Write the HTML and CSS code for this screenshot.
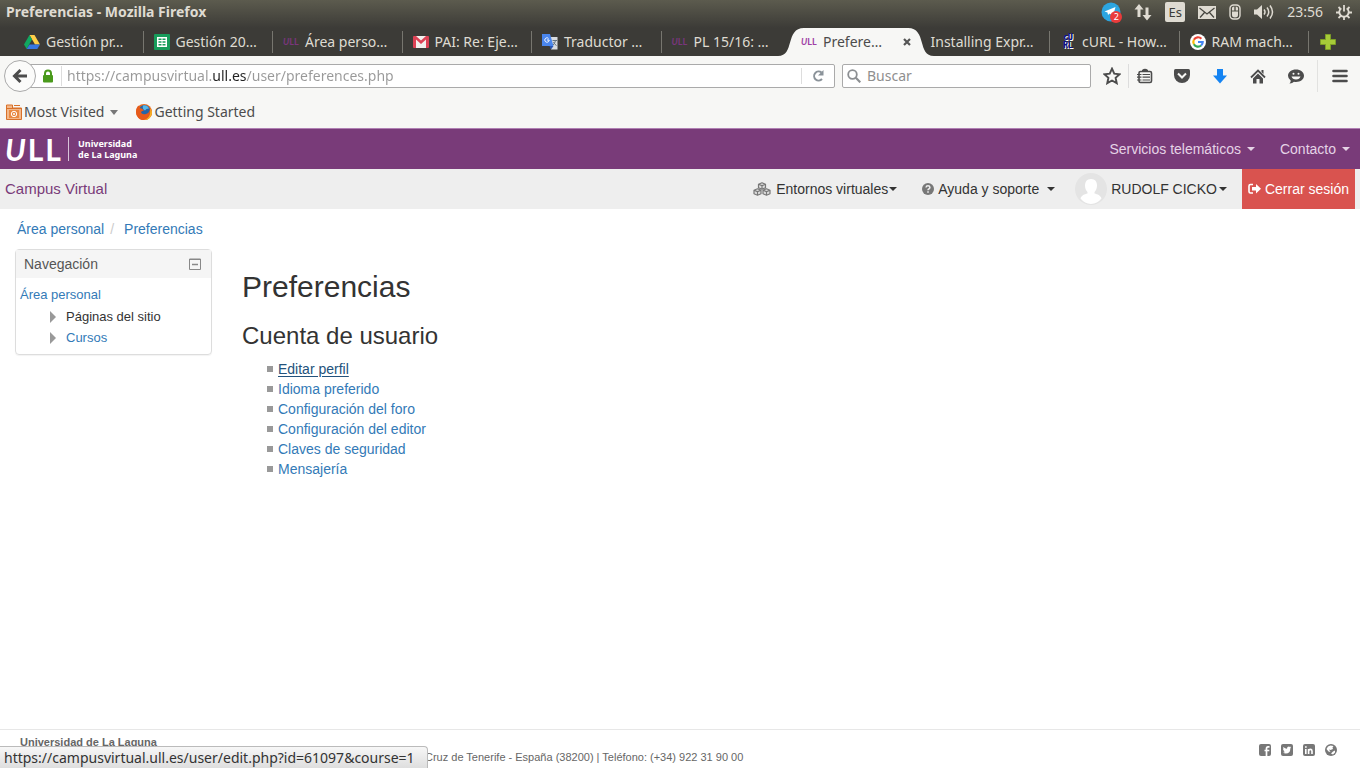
FILE: index.html
```html
<!DOCTYPE html>
<html lang="es">
<head>
<meta charset="utf-8">
<meta name="viewport" content="width=device-width, initial-scale=1">
<title>Preferencias</title>
<link rel="stylesheet" href="styles.css">
</head>
<body>
<div class="titlebar">
  <div class="window-title">Preferencias - Mozilla Firefox</div>
  <div class="tray">
    <span class="telegram">
      <svg width="20" height="20" viewBox="0 0 20 20"><circle cx="10" cy="10" r="9.500" fill="#2ca5e0"/><path d="M3.500 9.500 14.500 5l-2.500 9-3.500-2.500-1.500 1.500-.5-2.500z" fill="#fff"/></svg>
      <span class="badge">2</span>
    </span>
    <svg width="18" height="18" viewBox="0 0 18 18" fill="#dfdbd2"><path d="M5 1 .5 6.500h3V14h3V6.500h3zM13 17.500 8.500 12h3V4.500h3V12h3z"/></svg>
    <span class="lang">Es</span>
    <svg width="18" height="13" viewBox="0 0 18 13"><rect width="18" height="13" fill="#dfdbd2"/><path d="m1.500 2 7.500 6 7.500-6M2 11.500l4.500-5M16 11.500l-4.500-5" fill="none" stroke="#45443e" stroke-width="1.200"/></svg>
    <svg width="12" height="16" viewBox="0 0 12 16"><rect x="1" y="1" width="10" height="14" rx="3.500" fill="none" stroke="#dfdbd2" stroke-width="1.400"/><path d="M3 7.500h6V11q0 2.500-3 2.500T3 11zM3 4q0-1.500 2.300-1.500v4H3zM6.700 2.500Q9 2.500 9 4v2.500H6.700z" fill="#dfdbd2"/></svg>
    <svg width="20" height="16" viewBox="0 0 20 16"><path d="M0 5.500h3L8 1v14l-5-4.500H0z" fill="#dfdbd2"/><path d="M10 5.500q2 2.500 0 5M13 3.500q3.500 4.500 0 9M16 1.500q5 6.500 0 13" fill="none" stroke="#dfdbd2" stroke-width="1.500"/></svg>
    <span class="clock">23:56</span>
    <svg width="16" height="16" viewBox="0 0 16 16" fill="none" stroke="#dfdbd2"><path d="M5.300 4.200a4.700 4.700 0 1 0 5.400 0" stroke-width="1.800"/><path d="M8 1v6.500M8 12.500V16M3.500 8.500H0M12.500 8.500H16M4.800 11.800l-2.300 2.200M11.200 11.800l2.300 2.200M4.300 4.800 2.500 3M11.700 4.800 13.500 3" stroke-width="1.800"/></svg>
  </div>
</div>

<nav class="tabs" aria-label="Pestañas">
  <div class="tab-list">
    <a class="tab sep" href="#"><svg class="fav" viewBox="0 0 16 16"><path d="M5.500 1h5L16 10.500h-5z" fill="#ffcf48"/><path d="M5.500 1 8 5.500 2.700 15 0 10.500z" fill="#11a861"/><path d="M5.500 10.500H16L13.300 15H2.700z" fill="#3777e3"/></svg><span>Gestión pr…</span></a>
    <a class="tab sep" href="#"><svg class="fav" viewBox="0 0 16 16"><rect width="16" height="16" rx="1" fill="#179c5b"/><path d="M3 3h10v10H3z" fill="#fff"/><path d="M4.500 4.500h3v1.500h-3zM8.500 4.500h3v1.500h-3zM4.500 7.200h3v1.500h-3zM8.500 7.200h3v1.500h-3zM4.500 10h3v1.500h-3zM8.500 10h3v1.500h-3z" fill="#179c5b"/></svg><span>Gestión 20…</span></a>
    <a class="tab sep" href="#"><span class="fav fav-ull"><i>U</i>LL</span><span>Área perso…</span></a>
    <a class="tab sep" href="#"><svg class="fav" viewBox="0 0 16 16"><rect y="2" width="16" height="12" rx="1" fill="#dc4255"/><path d="M3 14V5.500l5 4.500 5-4.500V14zM3 2h10L8 6.500z" fill="#f3f0ee"/></svg><span>PAI: Re: Eje…</span></a>
    <a class="tab sep" href="#"><svg class="fav" viewBox="0 0 16 16"><path d="M8 3h7.500v12.500H9z" fill="#d9dce0"/><path d="M0 0h8l3.500 12H0z" fill="#4a86ed"/><path d="M7.500 12h4L9 15.500z" fill="#2956b3"/><path d="M5 6h2.200a2.200 2.200 0 1 1-.7-1.600" fill="none" stroke="#fff"/><path d="M10.500 6.500h4.500M13.500 6.500q-.5 3-2.500 4.500M11.500 8q1 2.500 3 3.500" fill="none" stroke="#647380"/></svg><span>Traductor …</span></a>
    <a class="tab" href="#"><span class="fav fav-ull"><i>U</i>LL</span><span>PL 15/16: …</span></a>
    <div class="tab active">
      <svg class="curve curve-left" width="26" height="28" viewBox="0 0 26 28"><path d="M0 28C17 28 7 0 26 0v28z" fill="#f7f7f5"/></svg>
      <svg class="curve curve-right" width="26" height="28" viewBox="0 0 26 28"><path d="M26 28C9 28 19 0 0 0v28z" fill="#f7f7f5"/></svg>
      <a class="tab-link" href="#" aria-current="page"><span class="fav fav-ull"><i>U</i>LL</span><span>Prefere…</span></a>
      <button class="close" type="button" aria-label="Cerrar pestaña"><svg width="8" height="8" viewBox="0 0 8 8"><path d="m1 1 6 6M7 1 1 7" stroke="#555" stroke-width="2.200"/></svg></button>
    </div>
    <a class="tab sep" href="#"><span>Installing Expr…</span></a>
    <a class="tab sep" href="#"><span class="fav fav-curl">cU<br>RL</span><span>cURL - How…</span></a>
    <a class="tab sep" href="#"><svg class="fav" viewBox="0 0 16 16"><circle cx="8" cy="8" r="8" fill="#fff"/><g fill="none" stroke-width="2.200"><path d="M11.400 4.700A4.700 4.700 0 0 0 3.900 5.700" stroke="#ea4335"/><path d="M3.900 5.700a4.700 4.700 0 0 0 0 4.600" stroke="#fbbc05"/><path d="M3.900 10.300a4.700 4.700 0 0 0 7.200 1.200" stroke="#34a853"/><path d="M11.100 11.500A4.700 4.700 0 0 0 12.700 8H8" stroke="#4285f4"/></g></svg><span>RAM mach…</span></a>
  </div>
  <button class="new-tab" type="button" aria-label="Nueva pestaña"><svg width="16" height="16" viewBox="0 0 16 16"><path d="M5.500.5h5v5h5v5h-5v5h-5v-5h-5v-5h5z" fill="#a6cb38" stroke="#7d9e26"/></svg></button>
</nav>

<div class="toolbar">
  <form class="nav-row">
    <button class="back" type="button" aria-label="Atrás"><svg width="16" height="16" viewBox="0 0 16 16"><path d="M8.500 2 2.500 8l6 6M3 8h12" fill="none" stroke="#4c4c4c" stroke-width="3"/></svg></button>
    <div class="field url">
      <svg class="lock" width="12" height="14" viewBox="0 0 12 14"><rect x="1" y="6" width="10" height="7.500" rx="1" fill="#4a9a1c"/><path d="M3 7V4.500a3 3 0 0 1 6 0V7" fill="none" stroke="#4a9a1c" stroke-width="2"/></svg>
      <input class="url-input" type="text" aria-label="Dirección" value="https://campusvirtual.ull.es/user/preferences.php">
      <button class="reload" type="button" aria-label="Recargar"><svg width="14" height="14" viewBox="0 0 14 14"><path d="M11 10a4.500 4.500 0 1 1-.5-6.500" fill="none" stroke="#8a9299" stroke-width="2"/><path d="M12.500 1v5.500H7z" fill="#8a9299"/></svg></button>
    </div>
    <div class="field search">
      <svg width="14" height="14" viewBox="0 0 14 14" fill="none" stroke="#8c8f92"><circle cx="5.500" cy="5.500" r="4.300" stroke-width="1.800"/><path d="m8.800 8.800 4.500 4.500" stroke-width="2.200"/></svg>
      <input type="text" aria-label="Buscar" placeholder="Buscar">
    </div>
    <div class="tools">
      <div class="pair">
        <button type="button" aria-label="Marcar página"><svg width="18" height="18" viewBox="0 0 16 16"><path d="m8 1.500 2 4.400 4.800.5-3.600 3.200 1 4.800L8 12l-4.200 2.400 1-4.800L1.200 6.400 6 5.900z" fill="none" stroke="#4c4c4c" stroke-width="1.700"/></svg></button>
        <button type="button" aria-label="Marcadores"><svg width="16" height="16" viewBox="0 0 16 16"><path d="M5 3.500V2Q8-.5 11 2v1.500z" fill="#4c4c4c"/><rect x="2" y="3.500" width="12.500" height="11" rx="1.500" fill="none" stroke="#4c4c4c" stroke-width="1.600"/><path d="M0 6.500h4.500M0 9.200h4.500M0 12h4.500M5.500 6.500h7.500M5.500 9.200h7.500M5.500 12h7.500" stroke="#4c4c4c" stroke-width="1.200"/></svg></button>
      </div>
      <button type="button" aria-label="Pocket"><svg width="16" height="15" viewBox="0 0 16 15"><path d="M1.500 0h13Q16 0 16 1.500V6A8 8 0 0 1 0 6V1.500Q0 0 1.500 0z" fill="#4c4c4c"/><path d="m4 4.500 4 4 4-4" fill="none" stroke="#f7f7f5" stroke-width="2"/></svg></button>
      <button type="button" aria-label="Descargas"><svg width="14" height="15" viewBox="0 0 14 15"><path d="M4 0h6v6.500h4L7 14.500 0 6.500h4z" fill="#1584f2"/></svg></button>
      <button type="button" aria-label="Inicio"><svg width="16" height="15" viewBox="0 0 16 15"><path d="M1 8.500 8 1.500l7 7" fill="none" stroke="#4c4c4c" stroke-width="1.800"/><path d="M11.500 1h2v4l-2-2zM3 9.500l5-5 5 5v5H9.500V10h-3v4.500H3z" fill="#4c4c4c"/></svg></button>
      <button type="button" aria-label="Hello"><svg width="16" height="15" viewBox="0 0 16 15"><path d="M8 .5c4.500 0 8 2.700 8 6.300S12.500 13 8 13q-1 0-2-.2-2 1.900-4.500 1.700 1.500-1.300 1.200-3Q0 9.700 0 6.800C0 3.200 3.500.5 8 .5z" fill="#4c4c4c"/><circle cx="5.500" cy="4.800" r="1" fill="#f7f7f5"/><circle cx="10.500" cy="4.800" r="1" fill="#f7f7f5"/><path d="M3.500 7.500h9q-1 3-4.500 3T3.500 7.500z" fill="#f7f7f5"/></svg></button>
      <span class="divider"></span>
      <button type="button" aria-label="Abrir menú"><svg width="16" height="14" viewBox="0 0 16 14"><path d="M1.500 2h13M1.500 7h13M1.500 12h13" stroke="#4c4c4c" stroke-width="2.600" stroke-linecap="round"/></svg></button>
    </div>
  </form>
  <div class="bookmarks">
    <button type="button"><svg width="16" height="16" viewBox="0 0 16 16"><path d="M.5 1h6v3h9v11.500H.5z" fill="#f3b88a" stroke="#d9712a"/><path d="M8 1.500h6M1 4.500h14" stroke="#d9712a"/><rect x="3" y="6" width="10" height="8" fill="#e98a43"/><circle cx="8" cy="10" r="2.700" fill="none" stroke="#fff"/><circle cx="8" cy="10" r="1" fill="#fff"/></svg><span>Most Visited</span><span class="caret-lg"></span></button>
    <a href="#"><svg width="16" height="16" viewBox="0 0 16 16"><circle cx="8" cy="8" r="8" fill="#e66a1e"/><circle cx="8.500" cy="6.500" r="5.500" fill="#2465a8"/><path d="M7 1.500q4-1 6 3-3 0-4 2-3-1-2-5z" fill="#58b7e8"/><path d="M0 8Q0 3 3 1.500 3 4 5.500 4.500 7 5 8 6.500q-3 .5-3 2 1 2.500 5 1.500 4-1 4-6 2 2 2 4.500A8 8 0 0 1 0 8z" fill="#e65a1a"/><path d="M14 4q2 2.500 2 5a7.500 7.500 0 0 1-8 7q5-1.500 6-6 .5-3 0-6z" fill="#f6b326"/></svg><span>Getting Started</span></a>
  </div>
</div>

<header class="site-header">
  <a class="logo" href="#" aria-label="Universidad de La Laguna"><span class="logo-mark"><i>U</i><span>L</span><span>L</span></span><span class="logo-name">Universidad<br>de La Laguna</span></a>
  <div class="header-menu">
    <button type="button">Servicios telemáticos <span class="caret"></span></button>
    <button type="button">Contacto <span class="caret"></span></button>
  </div>
</header>

<div class="site-nav">
  <a class="brand" href="#">Campus Virtual</a>
  <div class="user-menu">
    <button class="envs" type="button"><svg width="18" height="14" viewBox="0 0 18 14" fill="#ddd" stroke="#777" stroke-width="1.200" stroke-linejoin="round"><path d="m9 .8 3.500 1.400v3.600L9 7.200 5.500 5.800V2.200zM5.500 2.200 9 3.600l3.500-1.400M9 3.600v3.600M4.500 6.800 8 8.200v3.600l-3.500 1.400L1 11.800V8.200zM1 8.200l3.500 1.400L8 8.200M4.500 9.600v3.600M13.500 6.800 17 8.200v3.600l-3.500 1.400-3.500-1.400V8.200zM10 8.200l3.500 1.400L17 8.200M13.500 9.600v3.600"/></svg><span>Entornos virtuales</span><span class="caret"></span></button>
    <button class="help" type="button"><svg width="12" height="12" viewBox="0 0 12 12"><circle cx="6" cy="6" r="6" fill="#777"/><path d="M4 4.500Q4.200 2.800 6 2.800t1.900 1.600Q7.900 5.500 6.800 6 6 6.400 6 7.200" fill="none" stroke="#eee" stroke-width="1.500"/><path d="M5.200 8.200h1.600v1.500H5.200z" fill="#eee"/></svg><span>Ayuda y soporte</span><span class="caret"></span></button>
    <button class="user" type="button"><svg width="32" height="32" viewBox="0 0 32 32"><circle cx="16" cy="16" r="16" fill="#e4e4e4"/><path d="M16 6c4 0 6 2.800 6 6.500 0 3-1 5-2.500 6.500v1.500c3 1 6 1.500 7 5A15 15 0 0 1 16 31 15 15 0 0 1 5.500 25.500c1-3.500 4-4 7-5V19C11 17.500 10 15.500 10 12.500 10 8.800 12 6 16 6z" fill="#fff"/></svg><span>RUDOLF CICKO</span><span class="caret"></span></button>
    <a class="logout" href="#"><svg width="13" height="12" viewBox="0 0 13 12"><path d="M5 1.500H2.500Q1 1.500 1 3v5.500Q1 10 2.500 10H5" fill="none" stroke="#fff" stroke-width="1.600"/><path d="M4 4h4V1l5 4.800-5 4.700v-3H4z" fill="#fff"/></svg><span>Cerrar sesión</span></a>
  </div>
</div>

<nav class="breadcrumb" aria-label="Ruta"><a href="#">Área personal</a><span class="slash">/</span><a href="#">Preferencias</a></nav>

<div class="page">
  <aside class="block">
    <div class="block-head"><h2>Navegación</h2><button type="button" aria-label="Minimizar"><svg width="12" height="12" viewBox="0 0 12 12"><path d="M.5 1h11v10.500H.5zM0 1.500h12" fill="none" stroke="#888" /><path d="M3 6.500h6" stroke="#888" stroke-width="1.500"/></svg></button></div>
    <div class="block-body">
      <a href="#">Área personal</a>
      <ul>
        <li><button type="button">Páginas del sitio</button></li>
        <li><a href="#">Cursos</a></li>
      </ul>
    </div>
  </aside>
  <main>
    <h1>Preferencias</h1>
    <h2>Cuenta de usuario</h2>
    <ul class="prefs">
      <li><a class="hovered" href="#">Editar perfil</a></li>
      <li><a href="#">Idioma preferido</a></li>
      <li><a href="#">Configuración del foro</a></li>
      <li><a href="#">Configuración del editor</a></li>
      <li><a href="#">Claves de seguridad</a></li>
      <li><a href="#">Mensajería</a></li>
    </ul>
  </main>
</div>

<footer>
  <address><b>Universidad de La Laguna</b><span class="address-line">Cruz de Tenerife - España (38200) | Teléfono: (+34) 922 31 90 00</span></address>
  <div class="social">
    <a href="#" aria-label="Facebook"><svg width="12" height="12" viewBox="0 0 12 12"><rect width="12" height="12" rx="2" fill="#777"/><path d="M7.500 12V4.500Q7.500 2.800 9 2.800h1.500M5.500 6.500h4.800" fill="none" stroke="#fff" stroke-width="1.700"/></svg></a>
    <a href="#" aria-label="Twitter"><svg width="12" height="12" viewBox="0 0 12 12"><rect width="12" height="12" rx="2" fill="#777"/><path d="M2 8.500q1.200 0 2-.6-1.300-.2-1.500-1.200h.6Q2 6.200 2 5l.7.200Q1.700 4.300 2.400 3 3.900 4.600 6 4.700 5.900 2.500 7.900 2.500q.7 0 1.100.5l1-.4-.6 1 .8-.2-.8.900Q9.300 9.500 4.800 9.500 3.200 9.500 2 8.500z" fill="#fff"/></svg></a>
    <a href="#" aria-label="LinkedIn"><svg width="12" height="12" viewBox="0 0 12 12"><rect width="12" height="12" rx="2" fill="#777"/><path d="M2.800 5v5M5.600 10V5M5.600 7q.3-1.600 1.800-1.600T9 7v3M2 3h1.700" fill="none" stroke="#fff" stroke-width="1.600"/></svg></a>
    <a href="#" aria-label="Web"><svg width="12" height="12" viewBox="0 0 12 12"><circle cx="6" cy="6" r="6" fill="#777"/><path d="M3 2.500 5.500 1.500 8.500 2 7.500 3.500 8 5 5.500 6 4 5.500 5.500 8 3.500 7.500 1.500 5zM8 7.500l2-1v2L8 10.500 6 9.500z" fill="#fff"/></svg></a>
  </div>
</footer>
<div class="status">https://campusvirtual.ull.es/user/edit.php?id=61097&amp;course=1</div>
</body>
</html>
```
FILE: styles.css
```css
* { box-sizing: border-box; }

body {
  margin: 0;
  min-height: 100vh;
  display: flex;
  flex-direction: column;
  position: relative;
  background: #fff;
  color: #333;
  font: 14px/20px "Liberation Sans", Arial, sans-serif;
}

a { color: #337ab7; text-decoration: none; }
button { margin: 0; padding: 0; border: 0; background: none; color: inherit; font: inherit; }
svg { display: block; flex: none; }
ul { margin: 0; padding: 0; list-style: none; }

/* Window title and tray */
.titlebar, .tabs, .toolbar, .status { font-family: "Noto Sans", "Open Sans", sans-serif; }

.titlebar {
  height: 28px;
  padding: 0 8px 4px 6px;
  display: flex;
  align-items: center;
  justify-content: space-between;
  background: linear-gradient(#5c5b4e, #3c3b37);
  color: #dfdbd2;
}
.window-title { font-size: 14px; font-weight: bold; }
.tray { display: flex; align-items: center; gap: 13px; }
.telegram { position: relative; }
.badge {
  position: absolute;
  right: -1px;
  bottom: -1px;
  width: 12px;
  height: 12px;
  border-radius: 6px;
  background: #ea3b3b;
  color: #fff;
  font-size: 9px;
  line-height: 12px;
  text-align: center;
}
.lang {
  width: 20px;
  border-radius: 2px;
  background: #dfdbd2;
  color: #3c3b37;
  font-size: 13px;
  text-align: center;
}

/* Tabs */
.tabs { display: flex; align-items: center; padding-left: 14px; background: #3c3b37; }
.tab-list { flex: 1; display: flex; }
.tab {
  flex: 1 1 0;
  min-width: 0;
  height: 28px;
  position: relative;
  padding-left: 10px;
  display: flex;
  align-items: center;
  gap: 6px;
  color: #dfdbd2;
  white-space: nowrap;
}
.tab.sep::after {
  content: "";
  position: absolute;
  right: 0;
  top: 3px;
  bottom: 3px;
  border-right: 1px solid #77766f;
}
.fav { width: 16px; height: 16px; flex: none; }
.fav-ull { color: #79367c; font: bold 9px/16px Lato, sans-serif; }
.active .fav-ull { color: #a03fa5; }
.fav-curl {
  color: #0c0c8c;
  font: bold 8px/8px "DejaVu Sans Mono", monospace;
  text-align: center;
  text-shadow: 1px 1px #fff;
}
.active { background: linear-gradient(#f7f7f5, #f7f7f5) center / calc(100% - 24px) 100% no-repeat; }
.curve { position: absolute; top: 0; }
.curve-left { left: -13px; }
.curve-right { right: -13px; }
.tab-link { flex: 1; position: relative; display: flex; align-items: center; gap: 6px; color: #4c4c4c; }
.close { position: relative; margin-right: 10px; }
.new-tab { margin: 0 24px 0 11px; }

/* Toolbar */
.toolbar { background: #f7f7f5; border-bottom: 1px solid #b07fb3; color: #4c4c4c; }
.nav-row { display: flex; align-items: center; height: 40px; padding: 0 4px; }
.back {
  position: relative;
  z-index: 1;
  width: 32px;
  height: 32px;
  margin-right: -16px;
  display: grid;
  place-items: center;
  flex: none;
  border: 1px solid #aaa;
  border-radius: 50%;
  background: #fbfbfa;
}
.field {
  height: 24px;
  display: flex;
  align-items: center;
  border: 1px solid #aaa;
  border-radius: 2px;
  background: #fff;
}
.field input {
  flex: 1;
  min-width: 0;
  height: 20px;
  padding: 0;
  border: 0;
  outline: 0;
  background: none;
  color: #333;
  font: inherit;
  line-height: 20px;
}
.url { flex: 1; padding-left: 21px; }
.lock { margin-right: 7px; }
.field .url-input {
  padding-left: 5px;
  background: linear-gradient(90deg, #999 150px, #222 150px 184px, #999 184px);
  -webkit-background-clip: text;
  background-clip: text;
  -webkit-text-fill-color: transparent;
}
.lock + .url-input { border-left: 1px solid #ddd; }
.reload { width: 33px; height: 16px; display: grid; place-items: center; border-left: 1px solid #ddd; }
.search { width: 249px; margin-left: 7px; padding-left: 4px; gap: 6px; }
.search input::placeholder { color: #8f8f8f; opacity: 1; }
.tools { display: flex; align-items: center; gap: 6px; margin-left: 5px; }
.tools button { width: 32px; height: 24px; display: grid; place-items: center; }
.pair { display: flex; }
.pair button + button { border-left: 1px solid #ddd; }
.divider { width: 1px; height: 32px; margin-left: -1px; background: #e2e2e0; }
.bookmarks { display: flex; gap: 18px; height: 32px; padding-left: 6px; align-items: center; }
.bookmarks a, .bookmarks button { display: flex; align-items: center; gap: 2px; color: inherit; }
.caret-lg { margin-left: 4px; border: 4px solid transparent; border-top: 5px solid #777; border-bottom: 0; }

/* Site header */
.site-header {
  min-height: 40px;
  padding: 0 10px 0 5px;
  display: flex;
  align-items: center;
  justify-content: space-between;
  background: #793b79;
  color: #e5d3e6;
}
.logo { display: flex; align-items: center; color: #fff; }
.logo-mark { width: 64px; display: flex; gap: 2px; border-right: 1px solid #d8c3d9; font: bold 30px/24px Lato, sans-serif; }
.logo-name { padding-left: 9px; font: bold 9px/11px "Noto Sans", sans-serif; }
.header-menu, .user-menu { display: flex; align-items: center; }
.header-menu { gap: 25px; }
.header-menu button { display: flex; align-items: center; gap: 6px; }
.caret { border: 4px solid transparent; border-top-color: currentColor; border-bottom: 0; }

.site-nav {
  min-height: 40px;
  padding: 0 5px;
  display: flex;
  justify-content: space-between;
  align-items: center;
  background: #eee;
}
.brand { color: #793b79; font-size: 15px; }
.user-menu button { display: flex; align-items: center; }
.envs { gap: 1px; margin-right: 25px; }
.envs svg { margin-right: 4px; }
.help { gap: 4px; margin-right: 20px; }
.help .caret { margin-left: 4px; }
.user { gap: 4px; margin-right: 15px; }
.user .caret { margin-left: -2px; }
.logout { height: 40px; padding: 0 6px; display: flex; align-items: center; gap: 4px; background: #d9534f; color: #fff; }

.breadcrumb { padding: 10px 17px; }
.slash { padding: 0 10px 0 6px; color: #ccc; }

/* Page columns */
.page { flex: 1; display: flex; align-items: flex-start; gap: 30px; padding: 0 15px; }
.block {
  width: 197px;
  flex: none;
  border: 1px solid #ddd;
  border-radius: 4px;
  box-shadow: 0 1px 1px rgba(0, 0, 0, .05);
  font-size: 13px;
}
.block-head { height: 28px; padding: 0 10px 0 8px; display: flex; align-items: center; justify-content: space-between; background: #f5f5f5; color: #555; }
.block-head h2 { margin: 0; font-size: 14px; font-weight: normal; line-height: 20px; }
.block-body { padding: 6px 4px; line-height: 22px; }
.block-body ul { padding-left: 30px; }
.block-body li { display: flex; align-items: center; gap: 10px; height: 21px; }
.block-body li::before { content: ""; border: 6px solid transparent; border-left-color: #999; border-right: 0; }
main h1, main h2 { margin: 0; font-weight: normal; }
main h1 { margin-top: 21px; font-size: 30px; line-height: 34px; }
main h2 { margin-top: 19px; font-size: 24px; line-height: 26px; }
.prefs { margin: 10px 0 0 25px; }
.prefs li { display: flex; align-items: center; gap: 5px; }
.prefs li::before { content: ""; width: 6px; height: 6px; background: #999; }
.prefs .hovered { color: #23527c; text-decoration: underline; text-underline-offset: 2px; }

footer {
  display: flex;
  justify-content: space-between;
  align-items: flex-start;
  padding: 5px 23px 3px 20px;
  border-top: 1px solid #e7e7e7;
  color: #666;
  font-size: 11px;
  line-height: 15px;
}
address { font-style: normal; }
.address-line { display: block; padding-left: 405px; }
.social { display: flex; gap: 10px; padding-top: 9px; }

.status {
  position: absolute;
  left: 0;
  bottom: 0;
  height: 22px;
  padding: 0 12px 0 4px;
  border: 1px solid #bbb;
  border-width: 1px 1px 0 0;
  border-radius: 0 4px 0 0;
  background: linear-gradient(#f7f7f7, #dedede);
  color: #333;
  line-height: 22px;
}
```
